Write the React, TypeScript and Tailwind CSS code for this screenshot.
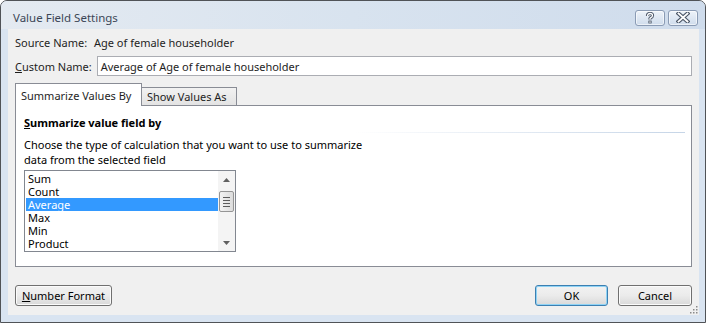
import React from "react";

const items = ["Sum", "Count", "Average", "Max", "Min", "Product"];

const font = { fontFamily: '"Noto Sans", "Open Sans", sans-serif' };

const TitleButton = ({ kind }: { kind: "help" | "close" }) => (
  <div className="w-[30px] h-[16px] rounded-[3px] border border-[#8a9bb4] bg-gradient-to-b from-[#eef3f9] to-[#cfdcec] flex items-center justify-center shadow-[inset_0_0_0_1px_rgba(255,255,255,0.6)]">
    {kind === "help" ? (
      <svg width="12" height="12" viewBox="0 0 12 12">
        <path d="M3.5 4 Q3.5 1.5 6 1.5 Q8.5 1.5 8.5 3.5 Q8.5 5 6.5 5.8 L6 6.5 L6 7.5" fill="none" stroke="#4a5566" strokeWidth="3.2" strokeLinejoin="round" />
        <rect x="4.4" y="8.6" width="3.2" height="2.8" fill="#4a5566" />
        <path d="M3.5 4 Q3.5 1.5 6 1.5 Q8.5 1.5 8.5 3.5 Q8.5 5 6.5 5.8 L6 6.5 L6 7.5" fill="none" stroke="#ffffff" strokeWidth="1.3" strokeLinejoin="round" />
        <rect x="5.3" y="9.4" width="1.4" height="1.3" fill="#ffffff" />
      </svg>
    ) : (
      <svg width="14" height="11" viewBox="0 0 14 11">
        <path d="M2.5 1.5 L11.5 9.5 M11.5 1.5 L2.5 9.5" stroke="#4a5566" strokeWidth="4" strokeLinecap="square" />
        <path d="M2.5 1.5 L11.5 9.5 M11.5 1.5 L2.5 9.5" stroke="#ffffff" strokeWidth="1.8" strokeLinecap="square" />
      </svg>
    )}
  </div>
);

const Button = ({ children, primary, className = "" }: { children: React.ReactNode; primary?: boolean; className?: string }) => (
  <button
    className={`h-[21px] rounded-[3px] border text-[11px] leading-[15px] text-black bg-gradient-to-b from-[#f2f2f2] via-[#ebebeb] to-[#d9d9d9] flex items-center justify-center ${
      primary
        ? "border-[#3c7fb1] shadow-[inset_0_0_0_1px_#8fd3f5]"
        : "border-[#707070] shadow-[inset_0_0_0_1px_#fbfbfb]"
    } ${className}`}
  >
    {children}
  </button>
);

export default function App() {
  return (
    <div className="w-[706px] h-[324px] bg-white" style={font}>
      <div className="w-[706px] h-[323px] border border-[#505357] rounded-tl-[7px] rounded-tr-[7px] bg-[#d9e4f1] flex flex-col">
        {/* title bar */}
        <div className="h-[28px] shrink-0 flex items-center pl-[12px] pr-[7px] bg-gradient-to-r from-[#e4eaf1] via-[#d8e3ef] to-[#cfdcec] rounded-t-[6px]">
          <span className="text-[11.5px] leading-[15px] text-[#3b4656] flex-1 pt-[4px] whitespace-nowrap">Value Field Settings</span>
          <div className="flex gap-[3px] mt-[5px]">
            <TitleButton kind="help" />
            <TitleButton kind="close" />
          </div>
        </div>

        {/* body */}
        <div className="flex-1 ml-[7px] mr-[6px] mb-[7px] bg-[#f0f0f0] px-[7px] flex flex-col text-[11px] leading-[15px] text-[#1e1e1e] whitespace-nowrap relative">
          <div className="flex items-center h-[15px] mt-[6px]">
            <span className="w-[79px]">Source Name:</span>
            <span>Age of female householder</span>
          </div>

          <div className="flex items-center mt-[6px]">
            <span className="w-[82px]">
              <span className="underline">C</span>ustom Name:
            </span>
            <div className="w-[597px] h-[20px] border border-[#abadb3] bg-white flex items-center pl-[3px]">
              Average of Age of female householder
            </div>
          </div>

          {/* tabs */}
          <div className="flex items-end mt-[7px] h-[22px] relative z-10">
            <div className="w-[127px] h-[23px] border border-b-0 border-[#898c95] bg-white flex items-center pl-[5px] -mb-[1px]">
              Summarize Values By
            </div>
            <div className="w-[95px] h-[18px] border border-l-0 border-b-0 border-[#898c95] bg-gradient-to-b from-[#f2f2f2] to-[#e3e3e3] flex items-center pl-[5px]">
              Show Values As
            </div>
          </div>
          <div className="w-[677px] h-[162px] border border-[#898c95] bg-white pl-[8px] pt-[9px] flex flex-col">
            <div className="font-bold text-black">
              <span className="underline">S</span>ummarize value field by
            </div>
            <div className="h-[1px] mt-[2px] mr-[6px] bg-gradient-to-r from-[#ffffff] via-[#ffffff] to-[#c6d5e7]" />
            <div className="mt-[4px] text-black">
              Choose the type of calculation that you want to use to summarize
              <br />
              data from the selected field
            </div>
            <div className="w-[212px] h-[82px] border border-[#828790] mt-[3px] flex bg-white">
              <div className="flex-1 pt-[1px] pl-[1px]">
                {items.map((it) => (
                  <div
                    key={it}
                    className={`h-[13px] leading-[13px] pl-[2px] ${
                      it === "Average" ? "bg-[#3399ff] text-white" : "text-black"
                    }`}
                  >
                    {it}
                  </div>
                ))}
              </div>
              <div className="w-[17px] bg-[#f4f4f4] flex flex-col items-center">
                <div className="h-[17px] w-full flex items-center justify-center">
                  <svg width="7" height="4" viewBox="0 0 7 4">
                    <path d="M0 4 L3.5 0 L7 4 Z" fill="#606060" />
                  </svg>
                </div>
                <div className="w-[15px] h-[21px] mt-[3px] rounded-[2px] border border-[#959595] bg-gradient-to-r from-[#f3f3f3] to-[#dcdcdc] flex flex-col items-center justify-center gap-[2px]">
                  <div className="w-[7px] h-[1px] bg-[#5c5c5c]" />
                  <div className="w-[7px] h-[1px] bg-[#5c5c5c]" />
                  <div className="w-[7px] h-[1px] bg-[#5c5c5c]" />
                  <div className="w-[7px] h-[1px] bg-[#5c5c5c]" />
                </div>
                <div className="flex-1" />
                <div className="h-[17px] w-full flex items-center justify-center">
                  <svg width="7" height="4" viewBox="0 0 7 4">
                    <path d="M0 0 L3.5 4 L7 0 Z" fill="#606060" />
                  </svg>
                </div>
              </div>
            </div>
          </div>

          {/* buttons */}
          <div className="flex items-center mt-[18px] w-[677px]">
            <Button className="w-[97px]">
              <span>
                <span className="underline">N</span>umber Format
              </span>
            </Button>
            <div className="flex-1" />
            <Button primary className="w-[73px]">
              OK
            </Button>
            <Button className="w-[74px] ml-[10px]">Cancel</Button>
          </div>

          <svg className="absolute right-[1px] bottom-[1px]" width="10" height="10" viewBox="0 0 10 10">
            {[
              [8, 2],
              [8, 5],
              [5, 5],
              [8, 8],
              [5, 8],
              [2, 8],
            ].map(([x, y]) => (
              <rect key={`${x}-${y}`} x={x} y={y} width="1.5" height="1.5" fill="#8a8a8a" />
            ))}
          </svg>
        </div>
      </div>
    </div>
  );
}
